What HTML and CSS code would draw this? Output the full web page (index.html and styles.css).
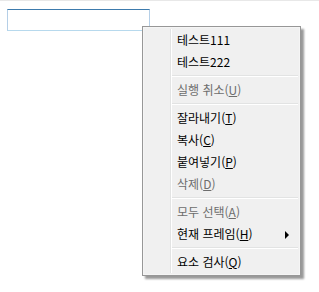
FILE: index.html
```html
<!DOCTYPE html>
<html lang="ko">
<head>
<meta charset="utf-8">
<link rel="stylesheet" href="styles.css">
</head>
<body>
<div class="topline"></div>
<div class="field"></div>
<div class="menu">
  <div class="item">테스트111</div>
  <div class="item">테스트222</div>
  <div class="sep"></div>
  <div class="item disabled">실행 취소(<u>U</u>)</div>
  <div class="sep"></div>
  <div class="item">잘라내기(<u>T</u>)</div>
  <div class="item">복사(<u>C</u>)</div>
  <div class="item">붙여넣기(<u>P</u>)</div>
  <div class="item disabled">삭제(<u>D</u>)</div>
  <div class="sep"></div>
  <div class="item disabled">모두 선택(<u>A</u>)</div>
  <div class="item sub">현재 프레임(<u>H</u>)<span class="arrow"></span></div>
  <div class="sep"></div>
  <div class="item">요소 검사(<u>Q</u>)</div>
</div>
</body>
</html>
```
FILE: styles.css
```css
html, body {
  margin: 0;
  padding: 0;
  background: #ffffff;
  width: 319px;
  height: 292px;
  overflow: hidden;
  font-family: "Noto Sans CJK KR", "Noto Sans", sans-serif;
}
.topline {
  height: 1px;
  background: #e8e8e8;
}
.field {
  margin: 8px 0 0 7px;
  width: 141px;
  height: 20px;
  border: 1px solid #b5cfe7;
  border-top-color: #3d7bad;
  border-bottom-color: #b7d9ed;
  background: #fff;
}
.menu {
  position: absolute;
  left: 142px;
  top: 26px;
  width: 157px;
  padding: 2px 0;
  border: 1px solid #979797;
  background: #f0f0f0;
  box-shadow: inset 0 0 0 1px #f5f5f5, 3px 3px 2px rgba(0,0,0,0.4);
  font-size: 12px;
  color: #000;
}
.menu::before {
  content: "";
  position: absolute;
  left: 27px;
  top: 2px;
  bottom: 2px;
  width: 1px;
  background: #e2e3e3;
  border-right: 1px solid #ffffff;
}
.item {
  position: relative;
  height: 22px;
  line-height: 22px;
  padding-left: 34px;
  white-space: nowrap;
}
.item u {
  text-decoration: underline;
  text-underline-offset: 1px;
}
.disabled {
  color: #6d6d6d;
}
.sep {
  height: 1px;
  margin: 2px 2px 2px 29px;
  background: #e2e3e3;
  border-bottom: 1px solid #ffffff;
}
.arrow {
  position: absolute;
  right: 11px;
  top: 8px;
  width: 0;
  height: 0;
  border-left: 4px solid #000;
  border-top: 4px solid transparent;
  border-bottom: 4px solid transparent;
}
```
